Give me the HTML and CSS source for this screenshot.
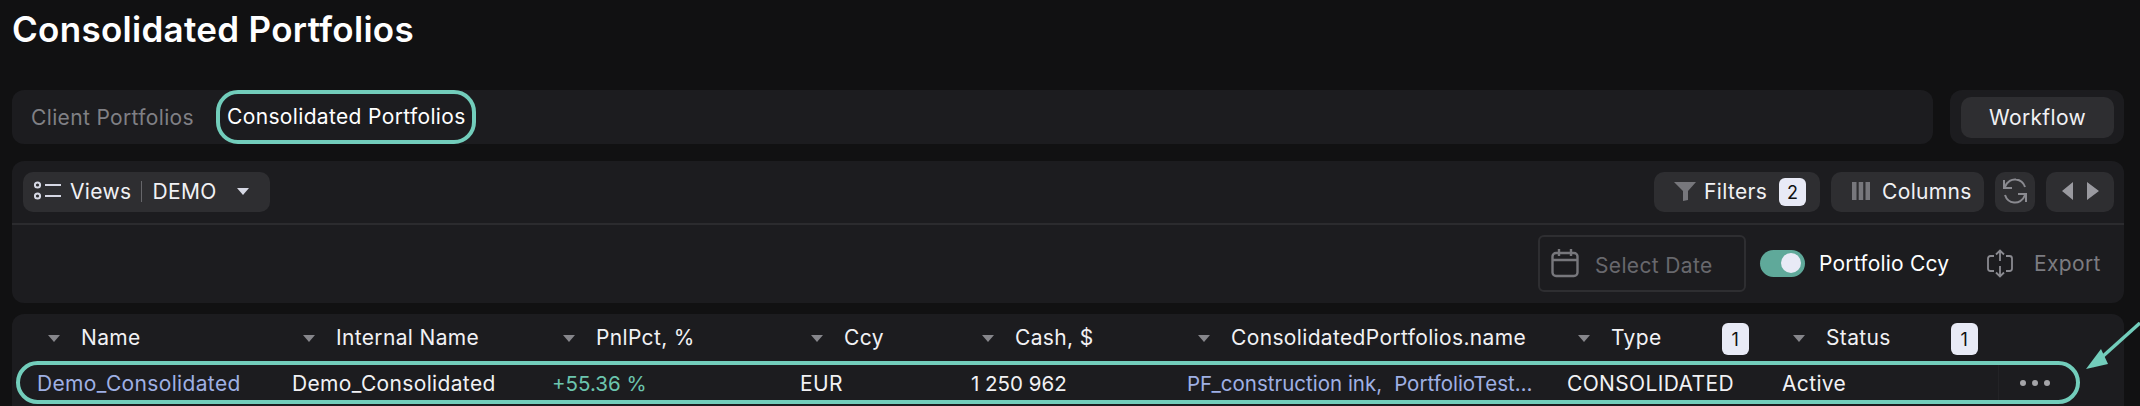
FILE: index.html
```html
<!DOCTYPE html>
<html lang="en">
<head>
<meta charset="utf-8">
<title>Consolidated Portfolios</title>
<link rel="stylesheet" href="styles.css">
</head>
<body>
<main class="page">
  <h1 class="title">Consolidated Portfolios</h1>

  <section class="tabs-row">
    <nav class="tabs card">
      <span class="tab">Client Portfolios</span>
      <span class="tab-active">Consolidated Portfolios</span>
    </nav>
    <div class="workflow card"><button class="btn btn-workflow">Workflow</button></div>
  </section>

  <section class="toolbar card">
    <div class="toolbar-top">
      <button class="btn btn-views">
        <svg class="icon-views" width="28" height="20" viewBox="0 0 28 20" fill="none" stroke="#d6d8e4" stroke-width="2"><circle cx="3.500" cy="4" r="2.600"/><circle cx="3.500" cy="15" r="2.600"/><path d="M11 4h16M11 15h16"/></svg>
        <span>Views</span><span class="sep"></span><span>DEMO</span>
        <i class="caret caret-light"></i>
      </button>
      <div class="toolbar-actions">
        <button class="btn btn-filters">
          <svg width="22" height="19" viewBox="0 0 22 19" fill="#77777c"><path d="M0 0h22l-8 9v9l-5 1V9z"/></svg>
          <span>Filters</span><b class="badge">2</b>
        </button>
        <button class="btn btn-columns">
          <svg width="18" height="18" viewBox="0 0 18 18" fill="#77777c"><rect width="4.500" height="18"/><rect x="6.700" width="4.500" height="18"/><rect x="13.500" width="4.500" height="18"/></svg>
          <span>Columns</span>
        </button>
        <button class="btn btn-refresh">
          <svg width="24" height="28" viewBox="0 0 24 28" fill="none" stroke="#8a8a90" stroke-width="2"><path d="M2 10C4 4 9 2 13 2.500C18 3 21 7 22 10"/><path d="M22 18C20 24 15 26 11 25.500C6 25 3 21 2 18"/><path d="M1 3v8h8M23 25v-8h-8"/></svg>
        </button>
        <button class="btn btn-nav">
          <svg width="37" height="18" viewBox="0 0 37 18" fill="#9a9aa0"><path d="M11 0v18L0 9zM25 0l12 9-12 9z"/></svg>
        </button>
      </div>
    </div>
    <div class="toolbar-bottom">
      <div class="date">
        <svg width="28" height="30" viewBox="0 0 28 30" fill="none" stroke="#77777c" stroke-width="2.400"><rect x="1.500" y="5" width="25" height="23" rx="3.500"/><path d="M1.500 12h25M8 1v7M20 1v7"/></svg>
        <span class="date-text">Select Date</span>
      </div>
      <span class="toggle"><i class="knob"></i></span>
      <span class="ccy">Portfolio Ccy</span>
      <svg class="icon-export" width="26" height="29" viewBox="0 0 26 29" fill="none" stroke="#8a8a90" stroke-width="1.800"><path d="M7 7H3.500C2 7 1 8 1 9.500v10C1 21 2 22 3.500 22H7M19 7h3.500C24 7 25 8 25 9.500v10c0 1.500-1 2.500-2.500 2.500H19"/><path d="M13 12V2M9 5.500L13 1.500l4 4M13 17v10M9 23.500l4 4 4-4"/></svg>
      <span class="export">Export</span>
    </div>
  </section>

  <section class="table card">
    <div class="thead">
      <div class="th"><i class="caret"></i><span>Name</span></div>
      <div class="th"><i class="caret"></i><span>Internal Name</span></div>
      <div class="th"><i class="caret"></i><span>PnlPct, %</span></div>
      <div class="th"><i class="caret"></i><span>Ccy</span></div>
      <div class="th"><i class="caret"></i><span>Cash, $</span></div>
      <div class="th"><i class="caret"></i><span>ConsolidatedPortfolios.name</span></div>
      <div class="th"><i class="caret"></i><span>Type</span><b class="badge badge-col badge-type">1</b></div>
      <div class="th"><i class="caret"></i><span>Status</span><b class="badge badge-col badge-status">1</b></div>
    </div>
    <div class="tr">
      <span class="td link">Demo_Consolidated</span>
      <span class="td">Demo_Consolidated</span>
      <span class="td green num">+55.36 %</span>
      <span class="td">EUR</span>
      <span class="td num">1 250 962</span>
      <span class="td link links"><span>PF_construction ink,</span><span>PortfolioTest…</span></span>
      <span class="td">CONSOLIDATED</span>
      <span class="td">Active</span>
      <span class="td-actions"><i></i><i></i><i></i></span>
    </div>
  </section>
</main>
<svg class="arrow" width="60" height="50" viewBox="0 0 60 50" fill="none"><path d="M60 1L12 44" stroke="#72cdbb" stroke-width="3.500"/><path d="M6 47L21 27L28 42z" fill="#72cdbb"/></svg>
</body>
</html>
```
FILE: styles.css
```css
* { box-sizing: border-box; }
html, body { margin: 0; height: 406px; overflow: hidden; background: #111112; }
body { position: relative; font-family: Inter, "Liberation Sans", sans-serif; font-size: 21px; letter-spacing: .35px; color: #f1f1f4; }
button { font: inherit; letter-spacing: inherit; color: inherit; border: 0; cursor: pointer; }
.page { padding: 0 16px 0 12px; }
.title { margin: 0 0 32px; height: 58px; line-height: 58px; font-size: 35px; font-weight: 600; letter-spacing: .3px; color: #fff; }
.card { background: #1c1c1f; border-radius: 12px; }
.btn { display: flex; align-items: center; background: #2e2e31; border-radius: 10px; height: 40px; padding: 0 0 2px; }

.tabs-row { display: flex; gap: 17px; height: 54px; margin-bottom: 17px; }
.tabs { flex: 1; display: flex; align-items: stretch; padding-left: 19px; gap: 25px; }
.tab { align-self: center; color: #808085; width: 160px; white-space: nowrap; }
.tab-active { display: flex; align-items: center; width: 260px; padding: 0 0 2px 7px; border: 4px solid #72cdbb; border-radius: 22px; white-space: nowrap; color: #fff; }
.workflow { width: 174px; padding: 7px 10px 6px 11px; }
.btn-workflow { width: 153px; height: 41px; justify-content: center; padding: 0; }

.toolbar { height: 142px; margin-bottom: 11px; }
.toolbar-top { display: flex; justify-content: space-between; height: 62px; padding: 11px 10px 0 11px; }
.btn-views { width: 247px; padding-left: 11px; }
.icon-views { margin-right: 8px; }
.sep { width: 1px; height: 21px; margin: 0 10px; background: #66666a; }
.caret { display: block; flex: none; width: 0; height: 0; border-left: 6px solid transparent; border-right: 6px solid transparent; border-top: 7px solid #86868b; }
.caret-light { margin-left: 20px; border-top-color: #d6d8e4; }
.toolbar-actions { display: flex; gap: 11px; }
.btn-filters { width: 166px; padding-left: 20px; gap: 8px; }
.badge { display: flex; flex: none; align-items: center; justify-content: center; width: 27px; height: 28px; border-radius: 6px; background: #e8eaf6; color: #111; font-weight: 400; font-size: 18px; letter-spacing: 0; }
.btn-filters .badge { margin: 2px 14px 0 auto; }
.btn-columns { width: 153px; padding-left: 21px; gap: 12px; }
.btn-refresh { width: 40px; justify-content: center; }
.btn-nav { width: 68px; justify-content: center; }

.toolbar-bottom { display: flex; align-items: center; justify-content: flex-end; height: 78px; border-top: 2px solid #2b2b2e; padding-right: 25px; }
.date { display: flex; align-items: center; gap: 16px; width: 208px; height: 57px; padding-left: 11px; border: 2px solid #2e2e31; border-radius: 6px; color: #68686d; }
.date-text { padding-top: 5px; white-space: nowrap; }
.toggle { display: flex; justify-content: flex-end; align-items: center; width: 45px; height: 27px; margin-left: 14px; padding-right: 4px; background: #5fa99a; border-radius: 14px; }
.knob { width: 20px; height: 20px; border-radius: 50%; background: #e8eaf6; }
.ccy { margin-left: 14px; width: 129px; white-space: nowrap; letter-spacing: .2px; color: #fff; }
.icon-export { margin-left: 39px; }
.export { margin-left: 21px; width: 65px; color: #7c7c81; }

.table { height: 92px; border-radius: 12px 12px 0 0; }
.thead, .tr { display: grid; grid-template-columns: 255px 260px 248px 171px 216px 380px 215px 216px 78px; align-items: center; }
.thead { height: 47px; padding: 3px 0 0 36px; }
.th { display: flex; align-items: center; white-space: nowrap; }
.th span { padding-bottom: 3px; }
.th .caret { margin: 0 21px 2px 0; }
.badge-col { height: 32px; }
.badge-type { margin-left: 60px; }
.badge-status { margin-left: 60px; }
.tr { width: 2064px; height: 43px; margin-left: 4px; padding-left: 17px; border: 4px solid #72cdbb; border-radius: 22px; }
.td { padding-top: 2px; white-space: nowrap; }
.num { font-size: 20.500px; letter-spacing: 0; }
.link { color: #9fb0e4; }
.links { display: flex; gap: 12px; font-size: 20.500px; letter-spacing: 0; }
.green { color: #6cc5ae; }
.td-actions { display: flex; align-items: center; gap: 6px; height: 100%; padding-left: 21px; border-left: 1px solid #232326; }
.td-actions i { width: 6px; height: 6px; border-radius: 50%; background: #a4a4a8; }

.arrow { position: absolute; left: 2080px; top: 322px; }
```
